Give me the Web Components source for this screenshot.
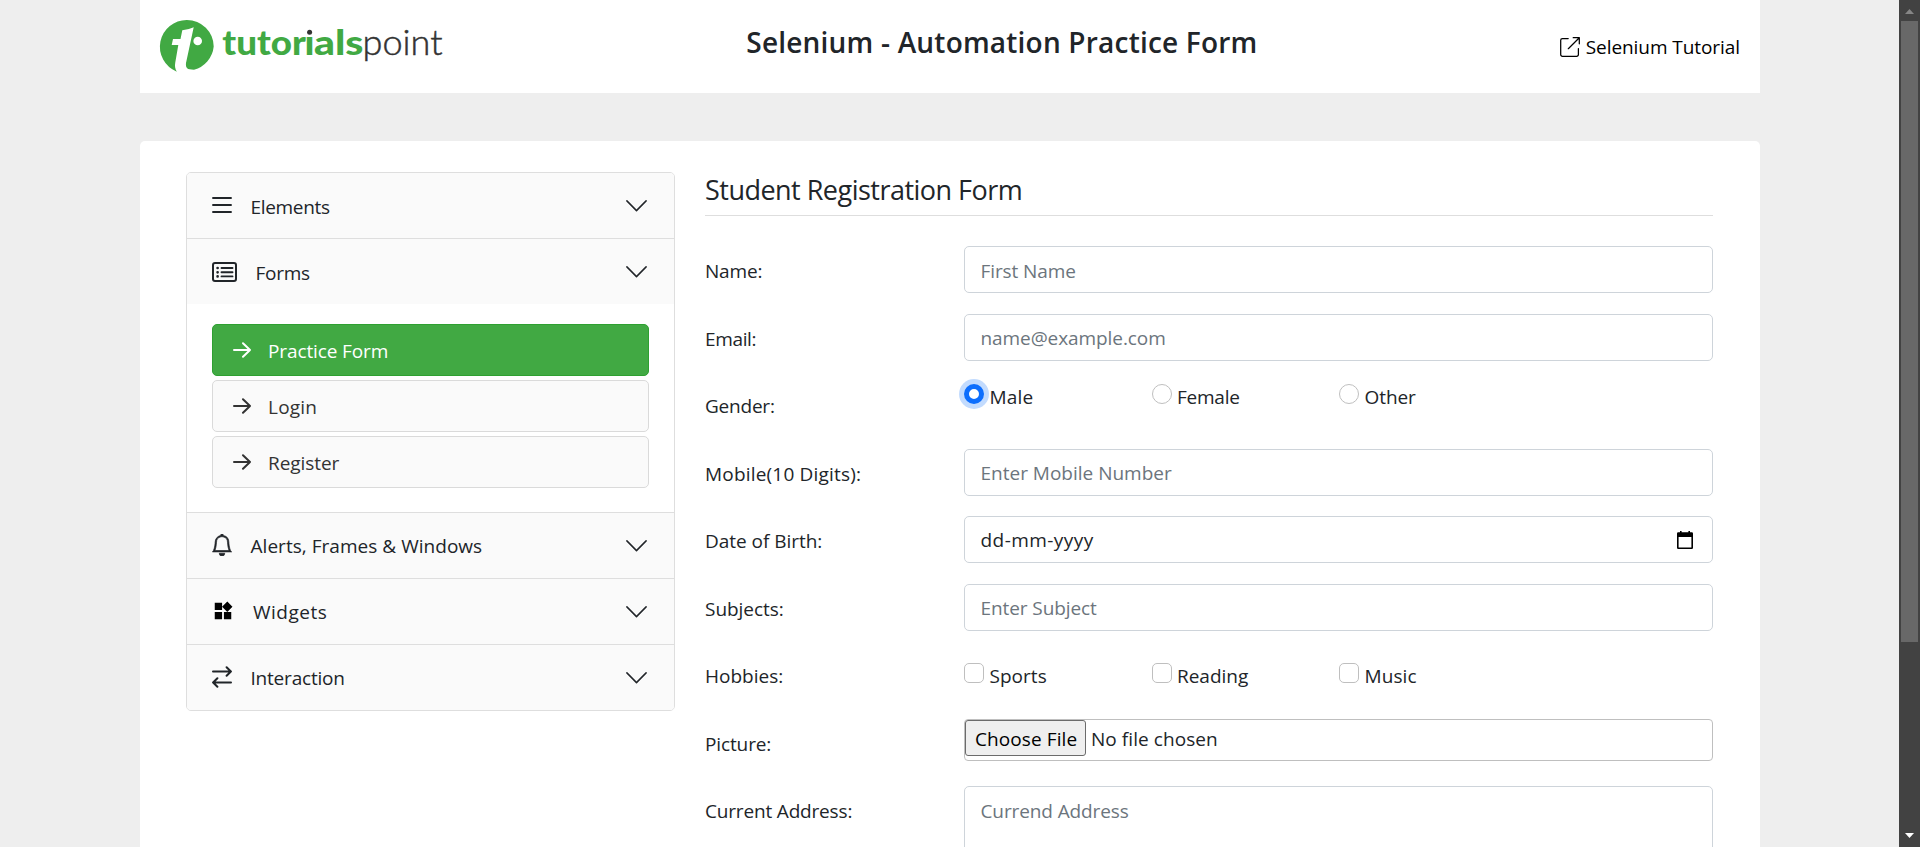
<!DOCTYPE html>
<html lang="en">
<head>
<meta charset="utf-8">
<title>Selenium Practice - Student Form</title>
<style>
  html, body { margin: 0; height: 847px; overflow: hidden; background: #eee; }
  body { font: 19px/30px "Open Sans", "Noto Sans", sans-serif; color: #212529; }
</style>
</head>
<body>
<practice-page></practice-page>

<script>
const ctx = document.createElement('canvas').getContext('2d');
/* Tracks a run of text so that it takes up the given width. */
function track(el, text, width) {
  const cs = getComputedStyle(el);
  ctx.font = `${cs.fontWeight} ${cs.fontSize} ${cs.fontFamily}`;
  const natural = ctx.measureText(text).width;
  el.style.letterSpacing = ((width + 1.2 - natural) / text.length).toFixed(3) + 'px';
}
function define(name, html, ready) {
  customElements.define(name, class extends HTMLElement {
    connectedCallback() {
      if (this.shadowRoot) return;
      const root = this.attachShadow({ mode: 'open' });
      root.innerHTML = html;
      if (ready) ready(this, root);
    }
  });
}

define('fit-text', `<style>:host{display:block;white-space:nowrap}</style><slot></slot>`,
  h => track(h, h.textContent.trim(), +h.getAttribute('w')));

const bi = (d, box = '0 0 16 16') => `<svg viewBox="${box}" fill="currentColor">${d}</svg>`;
const icons = {
  list: `<svg viewBox="0 0 20 20" stroke="currentColor" stroke-width="2.200" stroke-linecap="round"><path d="M1.100 2h17.800M1.100 9h17.800M1.100 16h17.800"/></svg>`,
  form: `<svg viewBox="0 0 25 20" fill="none" stroke="currentColor"><rect x="1" y="1" width="23" height="18" rx="2" stroke-width="2"/><path d="M9.500 6h11M9.500 10.300h11M9.500 14.400h11" stroke-width="1.9" stroke-linecap="round"/><path d="M5.600 6h.01M5.600 10.300h.01M5.600 14.400h.01" stroke-width="2.700" stroke-linecap="round"/></svg>`,
  bell: bi('<path stroke="currentColor" stroke-width=".5" d="M8 16a2 2 0 0 0 2-2H6a2 2 0 0 0 2 2M8 1.918l-.797.161A4 4 0 0 0 4 6c0 .628-.134 2.197-.459 3.742-.16.767-.376 1.566-.663 2.258h10.244c-.287-.692-.502-1.49-.663-2.258C12.134 8.197 12 6.628 12 6a4 4 0 0 0-3.203-3.92zM14.22 12c.223.447.481.801.78 1H1c.299-.199.557-.553.78-1C2.68 10.2 3 6.88 3 6c0-2.42 1.72-4.44 4.005-4.901a1 1 0 1 1 1.99 0A5 5 0 0 1 13 6c0 .88.32 4.2 1.22 6"/>'),
  widgets: `<svg viewBox="0 0 24 24" fill="#000"><path d="M13 13v8h8v-8zM3 21h8v-8H3zM3 3v8h8V3zm13.66-1.31L11 7.34 16.66 13l5.66-5.66z"/></svg>`,
  swap: `<svg viewBox="0 0 20 22" fill="none" stroke="currentColor" stroke-width="2" stroke-linecap="round" stroke-linejoin="round"><path d="M1 5.500h18M14.600 1.200l4.300 4.300-4.300 4.300M19 16.500H1M5.400 12.200l-4.300 4.300 4.300 4.300"/></svg>`,
  arrow: `<svg viewBox="0 0 18 16" fill="none" stroke="currentColor" stroke-width="2" stroke-linecap="round" stroke-linejoin="round"><path d="M1 8h16M10 1.2 17 8l-7 6.8"/></svg>`,
  chevron: `<svg viewBox="0 0 21 12" fill="none" stroke="#212529" stroke-width="1.5" stroke-linecap="round" stroke-linejoin="round"><path d="M.9 .9 10.5 10.6 20.1 .9"/></svg>`,
  out: `<svg viewBox="0 0 20 20" fill="none" stroke="currentColor" stroke-width="1.250" stroke-linecap="round" stroke-linejoin="round"><path d="M8.200 1.600H2.400A1.700 1.700 0 0 0 .7 3.300V17.600a1.700 1.700 0 0 0 1.700 1.700H16.700a1.700 1.700 0 0 0 1.700-1.700V11.500M13.200 .7h6.100v6.100M19.300 .7 8.300 11.700"/></svg>`,
  date: `<svg viewBox="0 0 16 18"><path d="M3 0h1.600v2H3zM11.400 0H13v2h-1.600z"/><path fill-rule="evenodd" d="M1.200 1.300h13.600a1.200 1.200 0 0 1 1.200 1.200V16.800a1.200 1.200 0 0 1-1.200 1.200H1.200A1.200 1.200 0 0 1 0 16.800V2.500a1.200 1.200 0 0 1 1.200-1.200zM1.600 6v10.400h12.800V6z"/></svg>`
};
define('ui-icon', `<style>:host{display:block;flex:none}span{display:block;height:100%}svg{display:block;width:100%;height:100%}</style><span></span>`,
  (h, r) => { r.querySelector('span').innerHTML = icons[h.getAttribute('name')]; });

define('brand-logo', `<style>:host{display:block}svg{display:block;overflow:visible}text{font-family:Lato,sans-serif}</style>
<svg width="300" height="62" viewBox="0 0 300 62">
  <path fill="#41a943" d="M27 0A26.800 26.800 0 0 0 16.800 51.700C15 48.500 14.700 46 15.200 43L18.300 25H11.700L13 19H20.500L22.300 10.200Q28 10 33.700 7.300L26 43C25.500 48 27 49.700 34 49.700A26.700 26.700 0 0 0 53.700 26.500A26.700 26.700 0 0 0 27 0Z"/>
  <circle cx="37.700" cy="21" r="4.300" fill="#fff"/>
  <text y="35" font-size="35" font-weight="900" fill="#41a943"><tspan x="62.300" textLength="83.500" lengthAdjust="spacingAndGlyphs">tutor</tspan><tspan x="144.500" textLength="10" lengthAdjust="spacingAndGlyphs">i</tspan><tspan x="154" textLength="49.500" lengthAdjust="spacingAndGlyphs">als</tspan></text>
  <path d="M145 6h9.500v9H145z" fill="#fff"/>
  <circle cx="149.600" cy="12.300" r="2.500" fill="#333"/>
  <text x="202.500" y="35" font-size="36" font-weight="300" fill="#333" stroke="#333" stroke-width=".5" textLength="80" lengthAdjust="spacingAndGlyphs">point</text>
</svg>`);

define('site-header', `<style>
:host{display:flex;justify-content:space-between;height:93px;background:#fff;padding:0 20px;box-sizing:border-box}
brand-logo{margin-top:20px;width:300px}
.t{font-size:28px;font-weight:600;line-height:40px;margin:22px 16px 0 0}
.l{display:flex;color:#000;gap:6px;height:30px;margin-top:32px}
ui-icon{width:20px;height:20px;margin-top:5px}
</style>
<brand-logo></brand-logo>
<fit-text class="t" w="510">Selenium - Automation Practice Form</fit-text>
<div class="l"><ui-icon name="out"></ui-icon><fit-text w="153">Selenium Tutorial</fit-text></div>`);

define('nav-section', `<style>
:host{display:block}
:host(:not(:first-of-type)){border-top:1px solid #dedede}
.h{display:flex;align-items:center;height:65px;background:#fafafa;padding:0 27px 0 25px;box-sizing:border-box}
.c{width:21px;height:12px;margin-left:auto}
fit-text{margin-top:2px}
:host([high]) fit-text{margin-top:0}
::slotted(nav-link:first-of-type){margin-top:20px}
::slotted(nav-link:last-of-type){margin-bottom:24px}
</style><div class="h"><ui-icon></ui-icon><fit-text></fit-text><ui-icon class="c" name="chevron"></ui-icon></div><slot></slot>`,
  (h, r) => {
    const a = n => h.getAttribute(n), i = r.querySelector('ui-icon'), t = r.querySelector('fit-text');
    const icon = document.createElement('ui-icon');
    icon.setAttribute('name', a('icon'));
    icon.style.cssText = a('box');
    i.replaceWith(icon);
    t.textContent = a('label');
    track(t, a('label'), +a('w'));
  });

define('nav-link', `<style>
:host{display:flex;align-items:center;height:52px;box-sizing:border-box;margin:0 25px 4px;border:1px solid #dadada;border-radius:5px;background:#fafafa;padding-left:20px;color:#333}
:host([active]){background:#41a943;border-color:#2ea031;color:#fff}
ui-icon{width:18px;height:16px;margin-right:17px}
</style><ui-icon name="arrow"></ui-icon><slot></slot>`);

define('side-nav', `<style>
:host{display:block;width:487px;border:1px solid #dedede;border-radius:5px;overflow:hidden;flex:none;align-self:flex-start}
.a{margin-top:2px}
</style>
<nav-section icon="list" box="width:20px;height:20px;margin:0 18.500px 0 0" label="Elements" w="78"></nav-section>
<nav-section icon="form" box="width:25px;height:20px;margin:0 18.500px 0 0" label="Forms" w="53">
  <nav-link active><fit-text class="a" w="119">Practice Form</fit-text></nav-link>
  <nav-link><fit-text class="a" w="48">Login</fit-text></nav-link>
  <nav-link><fit-text class="a" w="70">Register</fit-text></nav-link>
</nav-section>
<nav-section high icon="bell" box="width:22px;height:22px;margin:0 17.500px 1px -1px" label="Alerts, Frames &amp; Windows" w="230.500"></nav-section>
<nav-section high icon="widgets" box="width:22px;height:22px;margin:0 19px 1px 0" label="Widgets" w="73"></nav-section>
<nav-section high icon="swap" box="width:20px;height:22px;margin:0 18.500px 1px 0" label="Interaction" w="93"></nav-section>`);

define('form-row', `<style>
:host{display:flex;height:67.5px;align-items:flex-start}
.l{width:259px;flex:none;line-height:48px;margin-top:1px}
.c{flex:1;display:flex}
</style><div class="l"><fit-text></fit-text></div><div class="c"><slot></slot></div>`,
  (h, r) => {
    const t = r.querySelector('fit-text');
    t.textContent = h.getAttribute('label');
    track(t, t.textContent, +h.getAttribute('w'));
  });

define('text-field', `<style>
:host{display:block;flex:1}
input,textarea{display:block;width:100%;height:47px;box-sizing:border-box;border:1px solid #ced4da;border-radius:5px;background:#fff;padding:1px 16px 0 15.500px;font:inherit;letter-spacing:inherit;outline:0;resize:none}
:host([low]) input{padding-top:3px}
textarea{height:110px;padding-top:9px}
::placeholder{color:#6c757d;opacity:1}
</style>`,
  (h, r) => {
    const f = document.createElement(h.hasAttribute('multiline') ? 'textarea' : 'input');
    f.placeholder = h.getAttribute('placeholder');
    r.append(f);
    track(h, f.placeholder, +h.getAttribute('w'));
  });

define('date-field', `<style>
:host{display:flex;align-items:center;flex:1;height:47px;box-sizing:border-box;border:1px solid #ced4da;border-radius:5px;padding:0 19px 0 15.500px;justify-content:space-between}
ui-icon{width:16px;height:18px}
fit-text{margin-top:1px}
</style><fit-text w="112">dd-mm-yyyy</fit-text><ui-icon name="date"></ui-icon>`);

define('check-option', `<style>
:host{display:flex;width:187.500px;align-items:flex-start}
i{width:20px;height:20px;box-sizing:border-box;border:1px solid #bfbfbf;border-radius:5px;background:#fff;margin-right:5.500px;flex:none}
:host([round]) i{border-radius:50%}
:host([checked]) i{border:5px solid #0d6efd;box-shadow:0 0 0 5px #c2dbfe}
slot{display:block;margin-top:-2px}
</style><i></i><slot></slot>`);

define('file-field', `<style>
:host{display:flex;flex:1;height:42px;box-sizing:border-box;border:1px solid #bfbfbf;border-radius:4px}
button{height:36px;width:121px;box-sizing:border-box;border:1px solid #6b6b6b;border-radius:3px;background:#efefef;font:inherit;color:#000;padding:2px 0 0 9px;margin:0 5px 0 0;text-align:left}
</style><button><fit-text w="101">Choose File</fit-text></button><fit-text style="margin-top:4px" w="125.500">No file chosen</fit-text>`);

define('student-form', `<style>
:host{display:block;width:1008px;margin-left:30px}
.t{font-size:27px;line-height:36px;height:43px;border-bottom:1px solid #dedede;margin-bottom:30px}
.g{display:flex;padding-top:3px}.b{padding-top:12px}
</style>
<div class="t"><fit-text w="316">Student Registration Form</fit-text></div>
<form-row label="Name:" w="56"><text-field low placeholder="First Name" w="94"></text-field></form-row>
<form-row label="Email:" w="50"><text-field placeholder="name@example.com" w="184"></text-field></form-row>
<form-row label="Gender:" w="68.500"><div class="g">
  <check-option round checked><fit-text w="42.500">Male</fit-text></check-option>
  <check-option round><fit-text w="61.500">Female</fit-text></check-option>
  <check-option round><fit-text w="50">Other</fit-text></check-option></div></form-row>
<form-row label="Mobile(10 Digits):" w="155"><text-field placeholder="Enter Mobile Number" w="190"></text-field></form-row>
<form-row label="Date of Birth:" w="116"><date-field></date-field></form-row>
<form-row label="Subjects:" w="77.500"><text-field placeholder="Enter Subject" w="115"></text-field></form-row>
<form-row label="Hobbies:" w="77"><div class="g b">
  <check-option><fit-text w="56">Sports</fit-text></check-option>
  <check-option><fit-text w="70">Reading</fit-text></check-option>
  <check-option><fit-text w="51">Music</fit-text></check-option></div></form-row>
<form-row label="Picture:" w="65"><file-field></file-field></form-row>
<form-row label="Current Address:" w="146"><text-field multiline placeholder="Currend Address" w="147"></text-field></form-row>`);

define('page-scrollbar', `<style>
:host{display:flex;flex-direction:column;width:21px;background:#424242;align-items:center;height:847px;box-sizing:border-box;padding:9px 0;flex:none}
svg{display:block;width:9px;height:5px}
.th{width:17px;height:621px;background:#686868;margin-top:7px}
.d{margin-top:auto}
</style><svg viewBox="0 0 9 5"><path d="M0 5 4.500 0 9 5z" fill="#868686"/></svg><div class="th"></div><svg class="d" viewBox="0 0 9 5"><path d="M0 0 4.500 5 9 0z" fill="#fff"/></svg>`);

define('practice-page', `<style>
:host{display:flex;height:847px;overflow:hidden}
.v{flex:1;padding:0 139px 0 140px}
.card{display:flex;margin-top:48px;height:800px;background:#fff;border-radius:5px;padding:31px 46px 0;box-sizing:border-box}
</style>
<div class="v"><site-header></site-header><div class="card"><side-nav></side-nav><student-form></student-form></div></div>
<page-scrollbar></page-scrollbar>`);
</script>
</body>
</html>
